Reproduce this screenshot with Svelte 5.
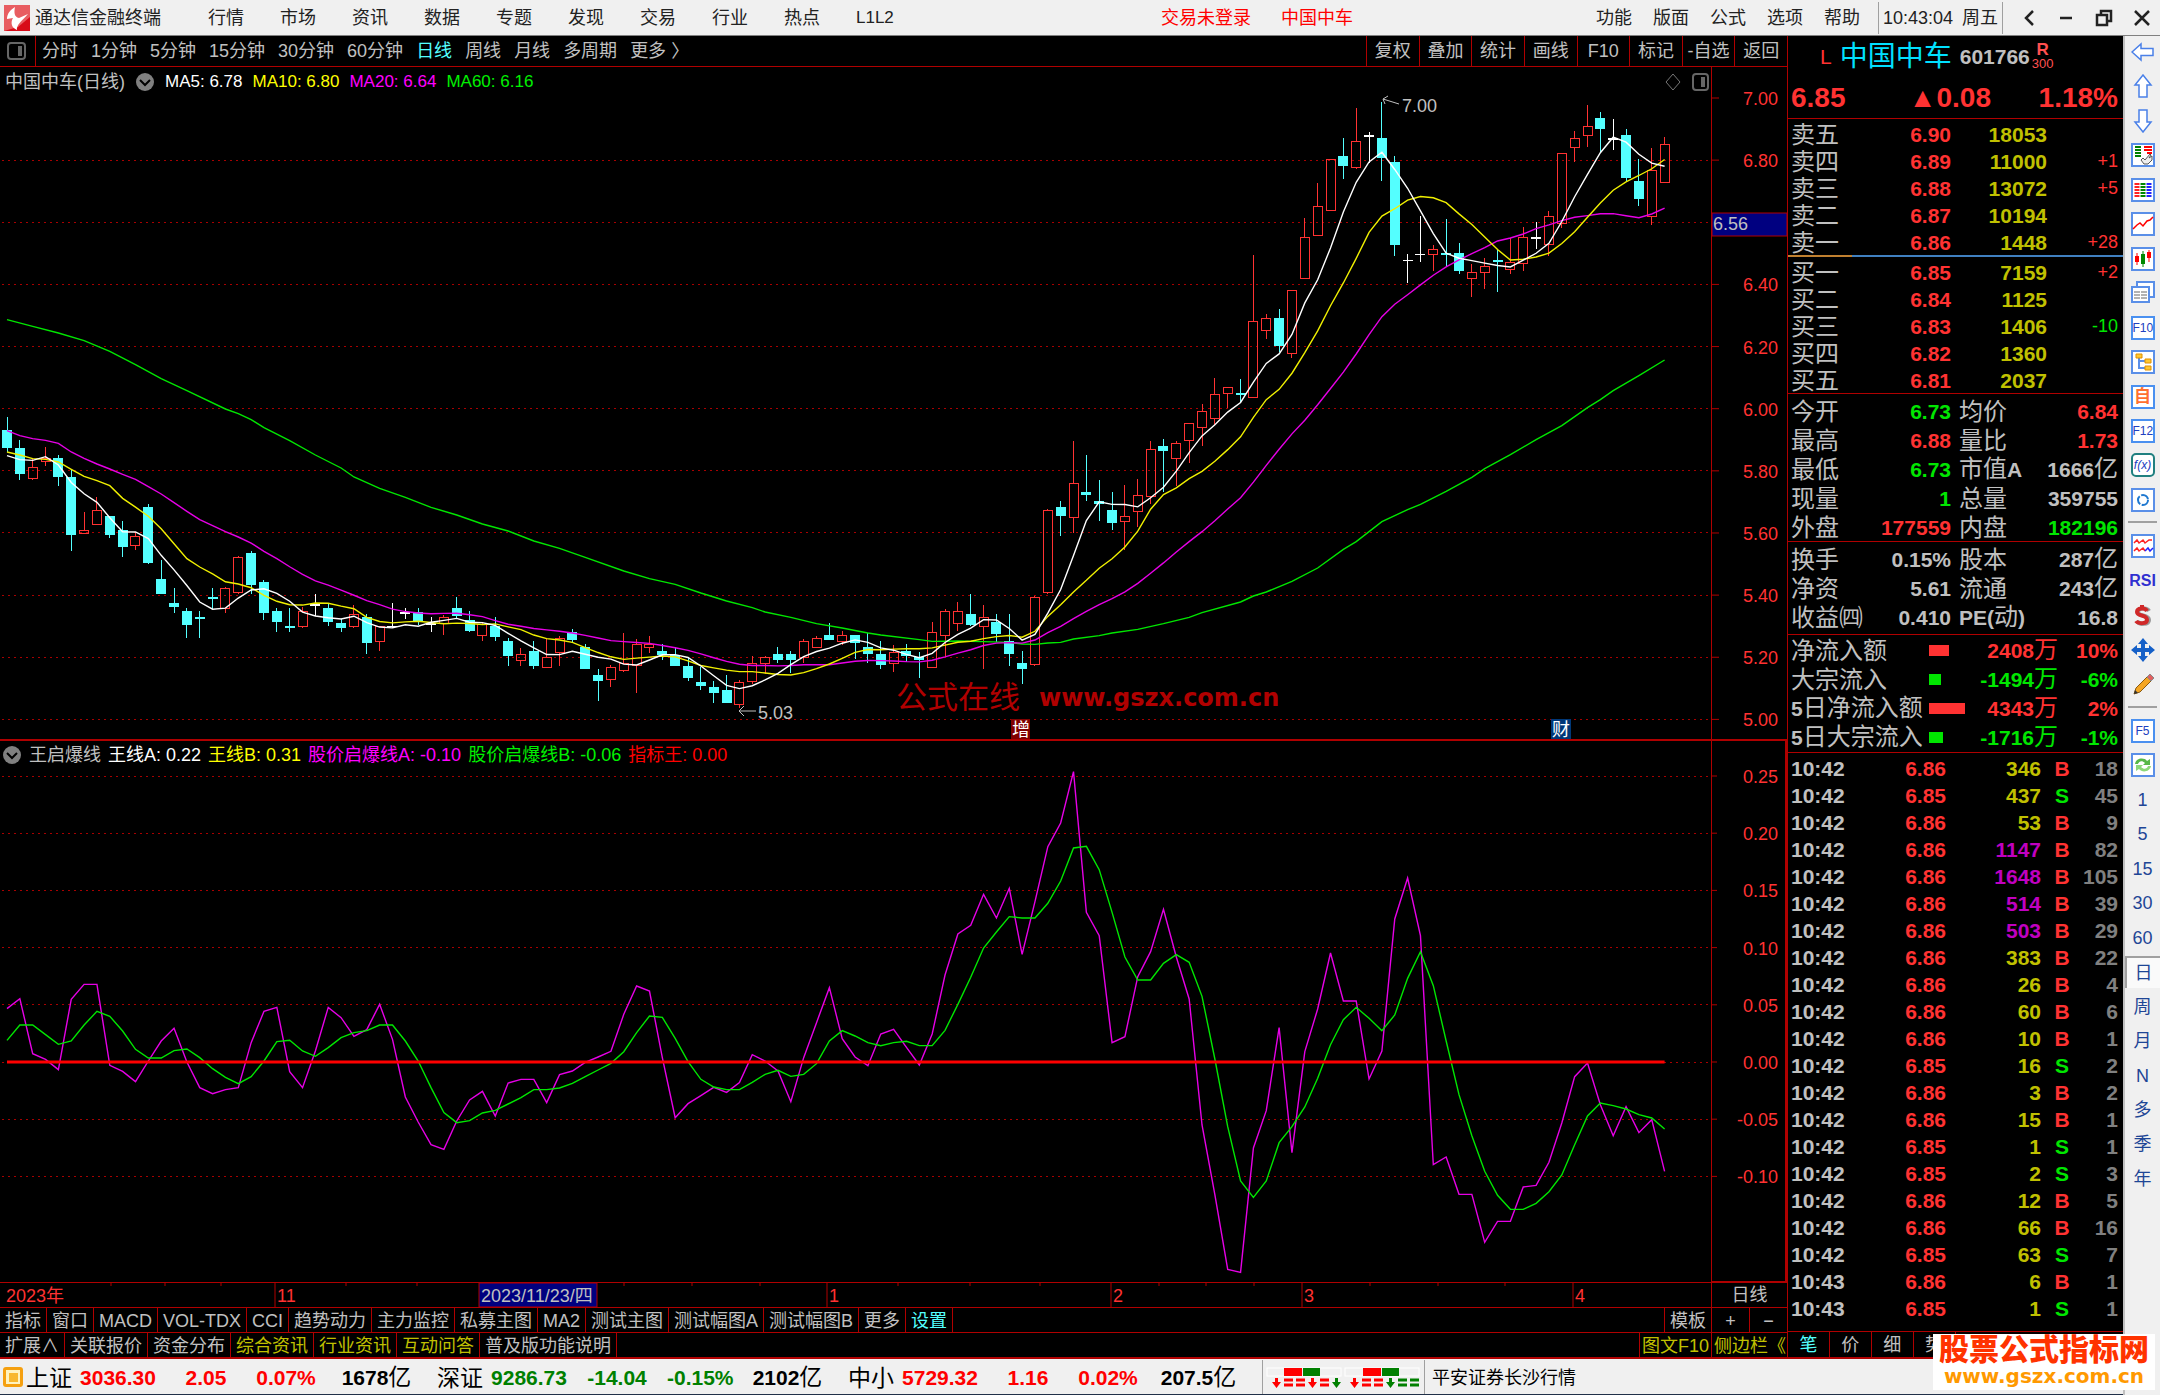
<script lang="ts">
    type Kind = 'c' | 'r' | 'w'
    type Bar = [Kind, number, number, number, number]

    let plotWidth = $state(1711)
    let period = $state('日线')
    let railActive = $state('日')

    const menus = ['行情', '市场', '资讯', '数据', '专题', '发现', '交易', '行业', '热点']
    const rightMenus = ['功能', '版面', '公式', '选项', '帮助']
    const periods = ['分时', '1分钟', '5分钟', '15分钟', '30分钟', '60分钟', '日线', '周线', '月线', '多周期', '更多 〉']
    const tools = ['复权', '叠加', '统计', '画线', 'F10', '标记', '-自选', '返回']
    const indicators = ['指标', '窗口', 'MACD', 'VOL-TDX', 'CCI', '趋势动力', '主力监控', '私募主图', 'MA2', '测试主图', '测试幅图A', '测试幅图B', '更多', '设置']
    const extras = ['扩展∧', '关联报价', '资金分布', '综合资讯', '行业资讯', '互动问答', '普及版功能说明']
    const yellowExtras = ['综合资讯', '行业资讯', '互动问答']

    // kind, high, body top, body bottom, low: thirds of a pixel, downwards
    const bars: Bar[] = [
        ['c', 112, 152, 205, 215], ['c', 179, 206, 282, 300], ['r', 233, 262, 295, 300], ['r', 202, 235, 245, 259], ['c', 224, 234, 291, 318],
        ['c', 268, 292, 466, 512], ['r', 395, 452, 461, 461], ['r', 350, 391, 433, 433], ['c', 409, 409, 465, 475], ['c', 422, 450, 502, 530],
        ['r', 457, 470, 496, 511], ['c', 373, 382, 551, 551], ['c', 540, 599, 642, 642], ['c', 625, 671, 683, 700], ['c', 684, 693, 737, 773],
        ['c', 692, 711, 717, 773], ['c', 625, 653, 659, 688], ['r', 620, 626, 686, 700], ['r', 527, 532, 637, 641], ['c', 513, 521, 615, 641],
        ['c', 599, 607, 700, 719], ['c', 684, 693, 727, 755], ['c', 684, 739, 745, 755], ['r', 680, 694, 740, 745], ['w', 643, 674, 674, 708],
        ['c', 671, 684, 727, 737], ['c', 716, 729, 745, 755], ['r', 676, 703, 740, 745], ['c', 703, 712, 791, 823], ['r', 740, 740, 784, 812],
        ['w', 670, 739, 739, 745], ['w', 683, 698, 698, 717], ['c', 684, 698, 726, 735], ['w', 712, 731, 731, 755], ['r', 706, 712, 730, 764],
        ['c', 652, 684, 709, 717], ['c', 694, 720, 755, 755], ['r', 727, 733, 766, 782], ['c', 711, 738, 773, 782], ['c', 773, 783, 830, 858],
        ['r', 805, 823, 842, 858], ['c', 783, 814, 859, 867], ['r', 775, 833, 861, 861], ['r', 768, 775, 818, 858], ['c', 746, 757, 780, 789],
        ['c', 793, 801, 867, 867], ['c', 868, 886, 903, 962], ['r', 855, 861, 898, 922], ['r', 760, 851, 871, 877], ['r', 778, 792, 855, 939],
        ['r', 769, 793, 802, 820], ['c', 793, 815, 825, 840], ['c', 802, 825, 858, 858], ['c', 830, 859, 894, 903], ['c', 860, 906, 920, 930],
        ['c', 904, 922, 939, 970], ['c', 886, 932, 970, 970], ['r', 900, 906, 973, 985], ['r', 828, 851, 905, 912], ['r', 828, 833, 850, 882],
        ['c', 801, 823, 840, 849], ['c', 814, 823, 840, 878], ['r', 778, 785, 833, 850], ['r', 769, 775, 802, 802], ['c', 729, 766, 781, 781],
        ['r', 752, 767, 785, 795], ['c', 765, 765, 791, 838], ['c', 760, 801, 822, 850], ['c', 783, 823, 857, 867], ['r', 796, 816, 850, 877],
        ['c', 791, 815, 830, 847], ['c', 815, 832, 840, 895], ['r', 725, 757, 862, 862], ['r', 688, 694, 766, 832], ['r', 665, 694, 730, 754],
        ['c', 643, 702, 737, 737], ['r', 675, 712, 739, 868], ['c', 702, 728, 763, 785], ['c', 702, 783, 822, 858], ['c', 814, 850, 867, 912],
        ['r', 647, 653, 853, 857], ['r', 387, 392, 636, 643], ['c', 364, 382, 408, 467], ['r', 184, 311, 411, 458], ['c', 224, 337, 345, 363],
        ['c', 300, 364, 372, 422], ['c', 337, 391, 430, 449], ['r', 314, 409, 424, 511], ['r', 296, 347, 393, 440], ['r', 184, 208, 349, 372],
        ['c', 178, 198, 214, 337], ['r', 184, 190, 235, 319], ['r', 130, 131, 181, 250], ['r', 71, 95, 141, 197], ['r', -5, 42, 114, 135],
        ['r', 23, 23, 41, 84], ['c', -2, 41, 46, 67], ['r', -375, -175, 51, 51], ['r', -199, -184, -148, -123], ['c', -212, -185, -101, -83],
        ['r', -270, -270, -79, -65], ['r', -487, -427, -304, -304], ['r', -590, -521, -434, -434], ['r', -661, -661, -508, -508], ['c', -726, -671, -641, -604],
        ['r', -815, -716, -638, -634], ['w', -744, -733, -733, -650], ['c', -835, -725, -665, -596], ['c', -672, -653, -403, -371], ['w', -379, -359, -359, -290],
        ['w', -492, -377, -377, -354], ['r', -406, -391, -377, -326], ['c', -482, -379, -373, -343], ['c', -411, -379, -326, -317], ['r', -347, -323, -304, -249],
        ['r', -365, -341, -323, -272], ['c', -390, -360, -354, -263], ['r', -425, -352, -332, -317], ['r', -460, -427, -350, -326], ['w', -473, -427, -427, -393],
        ['r', -506, -491, -408, -372], ['r', -680, -680, -471, -457], ['r', -748, -724, -697, -654], ['r', -825, -761, -733, -699], ['c', -803, -784, -753, -683],
        ['w', -784, -724, -724, -690], ['c', -752, -734, -606, -594], ['c', -663, -595, -542, -523], ['r', -695, -629, -491, -466], ['r', -730, -706, -592, -592],
    ]

    const ma60: [number, number][] = [
        [0, -181], [2, -161], [4, -141], [6, -118], [8, -86], [10, -46], [12, -4], [14, 32], [17, 87], [18, 101], [19, 119], [20, 143], [22, 182],
        [24, 225], [26, 264], [27, 291], [29, 325], [31, 352], [33, 382], [35, 405], [37, 432], [39, 453], [41, 483], [43, 505], [45, 532],
        [48, 573], [50, 596], [52, 613], [54, 639], [56, 663], [58, 683], [59, 696], [61, 712], [63, 731], [65, 744], [67, 759], [68, 765],
        [71, 779], [72, 784], [74, 783], [76, 785], [78, 787], [79, 792], [80, 793], [81, 789], [82, 787], [83, 777], [85, 767], [86, 759],
        [88, 748], [90, 731], [92, 712], [93, 698], [96, 666], [97, 648], [98, 636], [100, 604], [102, 564], [104, 508], [105, 485], [106, 455],
        [107, 425], [109, 389], [110, 373], [112, 334], [114, 292], [115, 266], [117, 224], [119, 179], [121, 137], [123, 83], [124, 59],
        [125, 32], [127, -13], [129, -60],
    ]

    const lineA = [
        803, 773, 938, 955, 986, 775, 730, 730, 973, 991, 1022, 960, 900, 862, 963, 1040, 1058, 1046, 1040, 905, 811, 799, 992, 1040, 930, 799,
        830, 886, 866, 790, 895, 1068, 1143, 1211, 1225, 1140, 1077, 1051, 1125, 1026, 1015, 1015, 1085, 1001, 990, 964, 948, 931, 820, 735, 750,
        950, 1130, 1088, 1064, 1039, 1054, 1025, 941, 960, 990, 1082, 950, 845, 740, 893, 948, 974, 879, 865, 919, 972, 879, 702, 579, 553, 460,
        531, 442, 640, 482, 317, 246, 92, 514, 584, 905, 887, 707, 632, 505, 648, 774, 1152, 1361, 1585, 1594, 1221, 1109, 860, 1235, 932, 804,
        636, 780, 780, 1014, 930, 534, 411, 584, 1271, 1248, 1360, 1360, 1504, 1441, 1441, 1338, 1333, 1264, 1146, 1007, 966, 1091, 1184, 1097,
        1175, 1136, 1291,
    ]
    const lineB = [
        898, 852, 852, 881, 910, 900, 852, 811, 826, 870, 925, 951, 951, 929, 924, 950, 983, 1009, 1028, 1007, 960, 902, 898, 930, 946, 920, 890,
        875, 869, 852, 852, 900, 960, 1040, 1115, 1145, 1139, 1116, 1108, 1089, 1070, 1046, 1046, 1041, 1027, 1007, 987, 967, 932, 875, 825, 829,
        892, 962, 1015, 1038, 1046, 1046, 1024, 1000, 988, 1006, 1000, 968, 900, 869, 885, 905, 914, 905, 901, 914, 914, 868, 790, 709, 621, 573,
        527, 531, 531, 487, 420, 321, 316, 386, 514, 648, 717, 717, 667, 641, 664, 766, 954, 1157, 1320, 1369, 1320, 1205, 1157, 1098, 1012, 911,
        836, 799, 832, 869, 822, 712, 632, 734, 900, 1061, 1184, 1291, 1363, 1405, 1405, 1387, 1352, 1302, 1211, 1125, 1086, 1094, 1104, 1121,
        1131, 1164,
    ]

    let step = $derived(plotWidth * 0.00751)
    const px = (i: number) => 7 + i * step
    const mainY = (v: number) => 285 + v / 3
    const subY = (v: number) => v / 3 - 26
    const closeOf = (b: Bar) => (b[0] == 'c' ? b[3] : b[2])

    // the first values need bars that lie left of the window
    function average(n: number, seed: number[]) {
        return bars.map((_, i) => {
            if (i < seed.length) return seed[i]
            let sum = 0
            for (let k = i - n + 1; k <= i; k++) sum += closeOf(bars[k])
            return sum / n
        })
    }
    const ma5 = average(5, [227, 239, 241, 230])
    const ma10 = average(10, [216, 225, 236, 238, 246, 268, 289, 302, 317])
    const ma20 = average(20, [152, 167, 176, 181, 190, 216, 235, 252, 267, 283, 298, 320, 342, 368, 394, 419, 437, 455, 471])

    const points = (list: number[], y: (v: number) => number) => list.map((v, i) => `${px(i)},${y(v)}`).join(' ')

    const prices = [7, 6.8, 6.6, 6.4, 6.2, 6, 5.8, 5.6, 5.4, 5.2, 5]
    const levels = [0.25, 0.2, 0.15, 0.1, 0.05, 0, -0.05, -0.1]
    const priceY = (p: number) => 31 + (7 - p) * 310.7
    const levelY = (l: number) => 321 - l * 1144

    const months: [number, string][] = [[275, '11'], [827, '1'], [1111, '2'], [1302, '3'], [1573, '4']]
    const weeks = [111, 165, 221, 346, 417, 624, 692, 760, 898, 970, 1040, 1159, 1206, 1254, 1370, 1438, 1505]

    const asks = [['卖五', '6.90', '18053', ''], ['卖四', '6.89', '11000', '+1'], ['卖三', '6.88', '13072', '+5'], ['卖二', '6.87', '10194', ''], ['卖一', '6.86', '1448', '+28']]
    const bids = [['买一', '6.85', '7159', '+2'], ['买二', '6.84', '1125', ''], ['买三', '6.83', '1406', '-10'], ['买四', '6.82', '1360', ''], ['买五', '6.81', '2037', '']]
    const stats = [
        ['今开', '6.73', 'green', '均价', '6.84', 'red'],
        ['最高', '6.88', 'red', '量比', '1.73', 'red'],
        ['最低', '6.73', 'green', '市值A', '1666亿', 'grey'],
        ['现量', '1', 'green', '总量', '359755', 'grey'],
        ['外盘', '177559', 'red', '内盘', '182196', 'green'],
    ]
    const funds = [
        ['换手', '0.15%', 'grey', '股本', '287亿', 'grey'],
        ['净资', '5.61', 'grey', '流通', '243亿', 'grey'],
        ['收益㈣', '0.410', 'grey', 'PE(动)', '16.8', 'grey'],
    ]
    const flows = [
        { name: '净流入额', bar: 20, value: '2408万', pct: '10%', color: 'red' },
        { name: '大宗流入', bar: 12, value: '-1494万', pct: '-6%', color: 'green' },
        { name: '5日净流入额', bar: 36, value: '4343万', pct: '2%', color: 'red' },
        { name: '5日大宗流入', bar: 14, value: '-1716万', pct: '-1%', color: 'green' },
    ]
    const ticks: [number, string, number][] = [
        [346, 'B', 18], [437, 'S', 45], [53, 'B', 9], [1147, 'B', 82], [1648, 'B', 105], [514, 'B', 39], [503, 'B', 29],
        [383, 'B', 22], [26, 'B', 4], [60, 'B', 6], [10, 'B', 1], [16, 'S', 2], [3, 'B', 2], [15, 'B', 1], [1, 'S', 1],
        [2, 'S', 3], [12, 'B', 5], [66, 'B', 16], [63, 'S', 7], [6, 'B', 1], [1, 'S', 1],
    ]
    const quoteTabs = ['笔', '价', '细', '势']

    const indexes = [
        { name: '上证', value: '3036.30', change: '2.05', pct: '0.07%', amount: '1678', color: 'up' },
        { name: '深证', value: '9286.73', change: '-14.04', pct: '-0.15%', amount: '2102', color: 'down' },
        { name: '中小', value: '5729.32', change: '1.16', pct: '0.02%', amount: '207.5', color: 'up' },
    ]
    const breadth = [
        { x: 0, signs: 'v==v=V' },
        { x: 78, signs: 'v==V##' },
    ]

    const frame = '<rect x="1" y="1" width="22" height="22" fill="#fff" stroke="#5a8fe8" stroke-width="2"/>'
    const icons: Record<string, string> = {
        back: '<path d="M1 12 L10 4 V8.500 H22 V15.500 H10 V20 Z" fill="#fff" stroke="#4a80e8" stroke-width="1.500"/>',
        up: '<path d="M12 1 L20 11 H16 V23 H8 V11 H4 Z" fill="#fff" stroke="#4a80e8" stroke-width="1.500"/>',
        down: '<path d="M12 23 L20 13 H16 V1 H8 V13 H4 Z" fill="#fff" stroke="#4a80e8" stroke-width="1.500"/>',
        pick: frame + '<path d="M4 4H10M4 7H10M4 10H10M4 13H10" stroke="#008000" stroke-width="2"/><path d="M13 4H21M13 7H21M16 10H21" stroke="#f00" stroke-width="2"/><path d="M10 17 L12 15 L14 17 L19 11 L20 12 L18 15 L21 13 V17 L17 21 H13 Z" fill="#eee" stroke="#555"/>',
        list: frame + '<g stroke-width="5" stroke-dasharray="2 1" fill="none"><path d="M6 5V20" stroke="#f22"/><path d="M12 5V20" stroke="#080"/><path d="M18 5V20" stroke="#22f"/></g>',
        trend: frame + '<path d="M2 17 L6 13 L9 11 L12 14 L16 9 L19 8 L22 5" fill="none" stroke="#f00" stroke-width="1.500"/>',
        kline: frame + '<path d="M6 6V18M18 3V15" stroke="#f00"/><path d="M12 4V20" stroke="#080"/><path d="M4 9H8V15H4ZM16 5H20V11H16Z" fill="#f00"/><path d="M10 7H14V17H10Z" fill="#080"/>',
        copy: '<path d="M6 1H23V16H6Z" fill="#fff" stroke="#5a8fe8" stroke-width="2"/><path d="M1 6H18V21H1Z" fill="#fff" stroke="#5a8fe8" stroke-width="2"/><path d="M3 11H9M10 11H16M3 14H9M10 14H16M3 17H9M10 17H16" stroke="#666"/>',
        tree: frame + '<path d="M8 6V18H14M8 11H14" fill="none" stroke="#5a8fe8" stroke-width="2"/><path d="M5 4H11V8H5ZM14 9H20V13H14ZM14 16H20V20H14Z" fill="#ffc830" stroke="#e09000"/>',
        circle: frame + '<circle cx="12" cy="12" r="5" fill="none" stroke="#1e78d0" stroke-width="2" stroke-dasharray="9 1.500"/>',
        waves: frame + '<path d="M3 9 L6 6 L8 9 L12 6 L14 9 L18 6 L21 6" fill="none" stroke="#f22" stroke-width="1.500"/><path d="M3 17 L6 14 L8 17 L12 14 L14 17" fill="none" stroke="#f22" stroke-width="1.500"/><path d="M14 17 L17 14 L19 17 L22 14" fill="none" stroke="#22f" stroke-width="1.500"/>',
        cash: '<path d="M18 7 C16 3 7 4 7 8 C7 13 18 10 18 16 C18 21 8 21 6 17" fill="none" stroke="#999" stroke-width="4"/><path d="M16 7 C14 3 6 4 6 8 C6 13 16 10 16 16 C16 20 7 20 5 17M11 1V4" fill="none" stroke="#d02828" stroke-width="4"/>',
        move: '<path d="M12 0 L17 6 H7ZM12 24 L17 18 H7ZM0 12 L6 7 V17ZM24 12 L18 7 V17Z" fill="#1560c8"/><path d="M12 5V19M5 12H19" stroke="#1560c8" stroke-width="4"/>',
        pen: '<path d="M3 21 L5 15 L16 4 L20 8 L9 19 Z" fill="#f5a623" stroke="#8a5a10"/><path d="M16 4 L19 1 L23 5 L20 8 Z" fill="#e06060" stroke="#888"/><path d="M3 21 L4 17 L7 20 Z" fill="#333"/>',
        refresh: frame + '<path d="M4 11 C5 5 13 4 16 8 L19 6 V12 H12 L14 10 C11 7 8 8 7 11Z" fill="#58b848"/><path d="M20 13 C19 19 11 20 8 16 L5 18 V12 H12 L10 14 C13 17 16 16 17 13Z" fill="#8cd878"/>',
    }
    const railTop = ['back', 'up', 'down', 'pick', 'list', 'trend', 'kline', 'copy', 'F10', 'tree', '自', 'F12', 'f(x)', 'circle']
    const railMiddle = ['waves', 'RSI', 'cash', 'move', 'pen']
    const railBottom = ['F5', 'refresh', '1', '5', '15', '30', '60', '日', '周', '月', 'N', '多', '季', '年']
    const boxed = ['F10', '自', 'F12', 'f(x)', 'F5']

    const split = (s: string) => s.match(/[\x20-\x7e]+|[^\x20-\x7e]+/g) ?? []
</script>

{#snippet mixed(text: string)}
    {#each split(text) as part}{#if part.charCodeAt(0) < 128}<b>{part}</b>{:else}{part}{/if}{/each}
{/snippet}

{#snippet railItem(name: string)}
    <button class="rail-item" class:pressed={railActive == name} aria-label={name} onclick={() => (railActive = name)}>
        {#if icons[name]}
            <svg width="24" height="24" viewBox="0 0 24 24">{@html icons[name]}</svg>
        {:else if boxed.includes(name)}
            <span class="boxed" class:orange={name == '自'} class:fx={name == 'f(x)'}>{name}</span>
        {:else}
            <span class:rsi={name == 'RSI'}>{name}</span>
        {/if}
    </button>
{/snippet}

{#snippet chevron()}
    <svg width="20" height="20" viewBox="0 0 20 20">
        <circle cx="10" cy="10" r="9" fill="#808080" />
        <path d="M5 8 L10 13 L15 8" fill="none" stroke="#000" stroke-width="2" />
    </svg>
{/snippet}

{#snippet book(rows: string[][])}
    <table class="book">
        <tbody>
            {#each rows as [name, price, volume, delta]}
                <tr>
                    <th scope="row">{name}</th>
                    <td class="red"><b>{price}</b></td>
                    <td class="yellow"><b>{volume}</b></td>
                    <td class="delta {delta[0] == '-' ? 'green' : 'red'}">{delta}</td>
                </tr>
            {/each}
        </tbody>
    </table>
{/snippet}

{#snippet pairs(rows: string[][])}
    <table class="pairs">
        <tbody>
            {#each rows as row}
                <tr>
                    <th scope="row">{@render mixed(row[0])}</th>
                    <td class={row[2]}>{@render mixed(row[1])}</td>
                    <th scope="row" class="second">{@render mixed(row[3])}</th>
                    <td class={row[5]}>{@render mixed(row[4])}</td>
                </tr>
            {/each}
        </tbody>
    </table>
{/snippet}

<div class="app">
    <header class="titlebar">
        <svg class="logo" width="26" height="26" viewBox="0 0 26 26">
            <rect width="26" height="26" fill="#d80c18" />
            <path d="M0 0H26V12L14 22L0 26Z" fill="#f08080" opacity="0.7" />
            <path d="M11 2 C6 5 3 9 3 14 L9 13 C6 18 8 23 13 25 C12 20 18 16 24 9 L15 13 C10 12 10 7 11 2Z" fill="#fff" />
        </svg>
        <span>通达信金融终端</span>
        <nav class="menus">
            {#each menus as menu}<button>{menu}</button>{/each}
            <button class="latin">L1L2</button>
        </nav>
        <div class="notice"><span>交易未登录</span><span>中国中车</span></div>
        <nav class="right-menus">
            {#each rightMenus as menu}<button>{menu}</button>{/each}
        </nav>
        <div class="clock"><span>10:43:04</span><span>周五</span></div>
        <div class="window">
            <button aria-label="后退"><svg width="16" height="18"><path d="M12 2 L5 9 L12 16" /></svg></button>
            <button aria-label="最小化"><svg width="16" height="18"><path d="M2 9H14" /></svg></button>
            <button aria-label="还原"><svg width="18" height="18"><path d="M2 6H12V16H2ZM6 5V2H16V12H13" /></svg></button>
            <button aria-label="关闭"><svg width="16" height="18"><path d="M1 2 L15 16M15 2 L1 16" /></svg></button>
        </div>
    </header>

    <div class="body">
        <div class="desk">
            <div class="work">
                <main class="charts">
                    <div class="periods">
                        <button class="toggle" aria-label="侧栏">
                            <svg width="20" height="18"><rect x="1" y="1" width="17" height="16" rx="3" fill="none" stroke="#666" stroke-width="2" /><rect x="11" y="4" width="4" height="10" fill="#666" /></svg>
                        </button>
                        <div class="period-list">
                            {#each periods as p}
                                <button class:cyan={period == p} onclick={() => (period = p)}>{p}</button>
                            {/each}
                        </div>
                        <div class="tools">
                            {#each tools as tool}<button>{tool}</button>{/each}
                        </div>
                    </div>

                    <section class="panel main-panel">
                        <div class="plot" bind:clientWidth={plotWidth}>
                            <div class="legend">
                                <span class="title">中国中车(日线)</span>
                                {@render chevron()}
                                <span class="white">MA5: 6.78</span>
                                <span class="bright-yellow">MA10: 6.80</span>
                                <span class="magenta">MA20: 6.64</span>
                                <span class="lime">MA60: 6.16</span>
                                <svg class="corner" width="47" height="20">
                                    <path d="M9 2 L16 10 L9 18 L2 10Z" fill="none" stroke="#777" />
                                    <rect x="29" y="2" width="15" height="16" rx="3" fill="none" stroke="#666" stroke-width="2" />
                                    <rect x="37" y="5" width="4" height="10" fill="#666" />
                                </svg>
                            </div>
                            <svg class="canvas" width={plotWidth} height="644">
                                {#each prices.slice(1) as p}
                                    <line class="grid" x1="2" x2={plotWidth} y1={priceY(p) - 28} y2={priceY(p) - 28} />
                                {/each}
                                <g class="watermark">
                                    <text x="896" y="613" font-size="31">公式在线</text>
                                    <text class="url" x="1039" y="611" font-size="24">www.gszx.com.cn</text>
                                </g>
                                {#each bars as [kind, high, top, bottom, low], i}
                                    <g class="bar {kind}">
                                        {#if kind == 'r'}
                                            <line x1={px(i)} x2={px(i)} y1={mainY(high)} y2={mainY(top)} />
                                            <line x1={px(i)} x2={px(i)} y1={mainY(bottom)} y2={mainY(low)} />
                                            <rect x={px(i) - 4.5} y={mainY(top)} width="9" height={(bottom - top) / 3} />
                                        {:else}
                                            <line x1={px(i)} x2={px(i)} y1={mainY(high)} y2={mainY(low)} />
                                            <rect x={px(i) - 5} y={mainY(top) - 0.5} width="10" height={Math.max(1.5, (bottom - top) / 3)} />
                                        {/if}
                                    </g>
                                {/each}
                                <polyline class="line" stroke="#00e600" points={ma60.map(([i, v]) => `${px(i)},${mainY(v)}`).join(' ')} />
                                <polyline class="line" stroke="#e600e6" points={points(ma20, mainY)} />
                                <polyline class="line" stroke="#f0f000" points={points(ma10, mainY)} />
                                <polyline class="line" stroke="#fff" points={points(ma5, mainY)} />
                                <path class="arrow" d="M1399 9 L1383 4 M1388 1 L1383 4 L1385 9" />
                                <text class="note" x="1402" y="17">7.00</text>
                                <path class="arrow" d="M756 616 H739 M744 611 L739 616 L744 621" />
                                <text class="note" x="758" y="624">5.03</text>
                                <rect x="1011" y="624" width="19" height="20" fill="#800000" />
                                <text class="mark" x="1012" y="641">增</text>
                                <rect x="1551" y="624" width="20" height="20" fill="#003878" />
                                <text class="mark" x="1552" y="641">财</text>
                            </svg>
                        </div>
                        <svg class="axis" width="75" height="672">
                            {#each prices as p}
                                <line x1="0" x2="7" y1={priceY(p)} y2={priceY(p)} />
                                {#if p != 6.6}<text x="66" y={priceY(p) + 7}>{p.toFixed(2)}</text>{/if}
                            {/each}
                            <rect x="0" y="146" width="75" height="23" fill="#000080" stroke="#b00000" />
                            <text class="cursor" x="1" y="163">6.56</text>
                        </svg>
                    </section>

                    <section class="panel sub-panel">
                        <div class="plot">
                            <div class="legend short">
                                {@render chevron()}
                                <span>王启爆线</span>
                                <span class="white">王线A: 0.22</span>
                                <span class="bright-yellow">王线B: 0.31</span>
                                <span class="magenta">股价启爆线A: -0.10</span>
                                <span class="lime">股价启爆线B: -0.06</span>
                                <span class="pure-red">指标王: 0.00</span>
                            </div>
                            <svg class="canvas" width={plotWidth} height="514">
                                {#each levels as l}
                                    <line class="grid" x1="2" x2={plotWidth} y1={levelY(l) - 26} y2={levelY(l) - 26} />
                                {/each}
                                <polyline class="line" stroke="#e600e6" points={points(lineA, subY)} />
                                <polyline class="line" stroke="#00e600" points={points(lineB, subY)} />
                                <line x1={px(0)} x2={px(129)} y1="295" y2="295" stroke="#f00" stroke-width="3" />
                            </svg>
                        </div>
                        <svg class="axis" width="75" height="540">
                            {#each levels as l}
                                <line x1="0" x2="5" y1={levelY(l)} y2={levelY(l)} />
                                <text x="66" y={levelY(l) + 7}>{l.toFixed(2)}</text>
                            {/each}
                        </svg>
                    </section>

                    <div class="dates">
                        <svg class="canvas" width={plotWidth} height="24">
                            <text x="6" y="19">2023年</text>
                            {#each weeks as x}<line x1={x} x2={x} y1="0" y2="3" />{/each}
                            {#each months as [x, name]}
                                <line x1={x} x2={x} y1="0" y2="24" />
                                <text x={x + 2} y="19">{name}</text>
                            {/each}
                            <rect x="479" y="0" width="118" height="24" fill="#000080" stroke="#b00000" />
                            <text class="cursor" x="481" y="19">2023/11/23/四</text>
                        </svg>
                        <span class="unit">日线</span>
                    </div>
                    <div class="strip">
                        {#each indicators as name}<button class:cyan={name == '设置'}>{name}</button>{/each}
                        <div class="strip-end">
                            <button>模板</button>
                            <button class="half">+</button>
                            <button class="half">−</button>
                        </div>
                    </div>
                    <div class="strip last">
                        {#each extras as name}<button class:yellow={yellowExtras.includes(name)}>{name}</button>{/each}
                        <div class="strip-end">
                            <button class="yellow tight">图文F10</button>
                            <button class="yellow tight side">侧边栏《</button>
                        </div>
                    </div>
                </main>

                <aside class="quote">
                    <div class="stock">
                        <span class="level">L</span>
                        <span class="name">中国中车</span>
                        <b>601766</b>
                        <span class="flags"><b>R</b><span>300</span></span>
                    </div>
                    <div class="last-price"><b>6.85</b><b>▲0.08</b><b>1.18%</b></div>
                    {@render book(asks)}
                    <div class="balance"></div>
                    {@render book(bids)}
                    {@render pairs(stats)}
                    {@render pairs(funds)}
                    <table class="flows">
                        <tbody>
                            {#each flows as flow}
                                <tr class={flow.color}>
                                    <th scope="row">{@render mixed(flow.name)}</th>
                                    <td class="bar-cell"><div class="flow-bar" style="width: {flow.bar}px"></div></td>
                                    <td>{@render mixed(flow.value)}</td>
                                    <td><b>{flow.pct}</b></td>
                                </tr>
                            {/each}
                        </tbody>
                    </table>
                    <table class="ticks">
                        <tbody>
                            {#each ticks as [volume, side, count], i}
                                <tr>
                                    <td class="grey time">10:{i < 19 ? 42 : 43}</td>
                                    <td class="red">{side == 'B' ? '6.86' : '6.85'}</td>
                                    <td class={volume > 500 ? 'purple' : 'yellow'}>{volume}</td>
                                    <td class="side-mark {side == 'B' ? 'red' : 'green'}">{side}</td>
                                    <td class="dim">{count}</td>
                                </tr>
                            {/each}
                        </tbody>
                    </table>
                    <div class="quote-tabs">
                        {#each quoteTabs as tab, i}<button class:cyan={i == 0}>{tab}</button>{/each}
                    </div>
                </aside>
            </div>

            <footer class="status">
                <svg class="status-icon" width="22" height="22" viewBox="0 0 22 22">
                    <rect x="1" y="1" width="20" height="20" rx="3" fill="#f5a010" />
                    <rect x="4" y="4" width="14" height="14" fill="#fff3c0" />
                    <rect x="7" y="7" width="9" height="9" fill="#f8b830" />
                </svg>
                {#each indexes as idx}
                    <div class="index {idx.color}">
                        <span class="index-name">{idx.name}</span>
                        <b>{idx.value}</b>
                        <b>{idx.change}</b>
                        <b>{idx.pct}</b>
                        <span class="amount"><b>{idx.amount}</b>亿</span>
                    </div>
                {/each}
                <svg class="breadth" width="161" height="34">
                    {#each breadth as group, g}
                        <rect x={group.x + 4} y="8" width="74" height="8" fill="none" stroke="#fff" />
                        <rect x={group.x + 21 + g} y="8" width="18" height="8" fill="#f00" />
                        <rect x={group.x + 40 + g} y="8" width="17" height="8" fill="#008000" />
                        {#each group.signs as sign, i}
                            {#if sign == 'v' || sign == 'V'}
                                <path d="M{group.x + 12 + i * 12} 18 h3 v4 h3 l-4.5 6 l-4.5 -6 h3Z" fill={sign == 'v' ? '#f00' : '#008000'} />
                            {:else}
                                <path d="M{group.x + 9 + i * 12} 20 h9 m-9 5 h9" fill="none" stroke={sign == '=' ? '#f00' : '#008000'} stroke-width="3" />
                            {/if}
                        {/each}
                    {/each}
                </svg>
                <span class="broker">平安证券长沙行情</span>
            </footer>
        </div>

        <nav class="rail">
            <div class="rail-group first">
                {#each railTop as name}{@render railItem(name)}{/each}
            </div>
            <hr />
            <div class="rail-group second-group">
                {#each railMiddle as name}{@render railItem(name)}{/each}
            </div>
            <hr />
            <div class="rail-group third">
                {#each railBottom as name}{@render railItem(name)}{/each}
            </div>
        </nav>
    </div>

    <div class="banner">
        <strong>股票公式指标网</strong>
        <span>www.gszx.com.cn</span>
    </div>
</div>

<style>
    :global(body) {
        margin: 0;
        background: #000;
    }
    .app {
        position: relative;
        font-family: "Liberation Sans", "Noto Sans CJK SC", sans-serif;
        font-size: 18px;
        line-height: 22px;
        color: #c0c0c0;
        white-space: nowrap;
    }
    button {
        padding: 0;
        border: 0;
        background: none;
        color: inherit;
        font: inherit;
        line-height: 22px;
    }
    svg {
        display: block;
        flex: none;
    }
    table {
        width: 100%;
        table-layout: fixed;
        border-collapse: collapse;
    }
    th,
    td {
        padding: 0;
        text-align: right;
        font-weight: normal;
    }
    th {
        text-align: left;
        color: #c0c0c0;
    }
    .latin { font-size: 17px; }
    .cyan { color: #54ffff; }
    .white { color: #fff; }
    .red { color: #ff3232; }
    .pure-red { color: #f00; }
    .green { color: #00e600; }
    .lime { color: #00f000; }
    .magenta { color: #f0f; }
    .purple { color: #c000c0; }
    .bright-yellow { color: #ff0; }
    .yellow { color: #c0c000; }
    .grey { color: #c0c0c0; }
    .dim { color: #808080; }

    .titlebar {
        display: flex;
        align-items: center;
        height: 35px;
        padding-left: 4px;
        border-bottom: 1px solid #808080;
        background: #f0f0f0;
        color: #222;
    }
    .logo { margin-right: 5px; }
    .menus {
        display: flex;
        gap: 36px;
        margin-left: 47px;
    }
    .notice {
        display: flex;
        gap: 30px;
        margin-left: auto;
        color: #f00;
    }
    .right-menus {
        display: flex;
        gap: 21px;
        margin: 0 18px 0 243px;
    }
    .clock {
        display: flex;
        align-items: center;
        gap: 9px;
        height: 32px;
        padding: 0 4px;
        border: solid #a0a0a0;
        border-width: 0 1px;
    }
    .window {
        display: flex;
        gap: 21px;
        padding: 0 10px 0 18px;
    }
    .window path {
        fill: none;
        stroke: #222;
        stroke-width: 2.5;
    }

    .body,
    .work {
        display: flex;
    }
    .desk {
        flex: 1;
        min-width: 0;
    }
    .charts {
        flex: 1;
        min-width: 0;
    }
    .periods {
        display: flex;
        height: 30px;
        border-bottom: 1px solid #b00000;
    }
    .toggle {
        width: 36px;
        padding-left: 7px;
        border-right: 1px solid #b00000;
    }
    .period-list {
        display: flex;
        gap: 13px;
        padding-left: 6px;
    }
    .tools {
        display: flex;
        width: 421px;
        margin-left: auto;
    }
    .tools button {
        flex: 1;
        border-left: 1px solid #b00000;
    }

    .panel { display: flex; }
    .main-panel { border-bottom: 2px solid #b00000; }
    .plot {
        flex: 1;
        min-width: 0;
        overflow: hidden;
    }
    .legend {
        display: flex;
        align-items: center;
        gap: 10px;
        height: 28px;
        padding: 2px 0 0 5px;
        box-sizing: border-box;
        font-size: 17px;
    }
    .short {
        gap: 7px;
        height: 26px;
        padding-left: 2px;
        font-size: 18px;
    }
    .title { font-size: 18px; }
    .corner { margin-left: auto; }
    .grid {
        stroke: #a80000;
        stroke-dasharray: 2 4;
        shape-rendering: crispEdges;
    }
    .line {
        fill: none;
        stroke-width: 1.4;
    }
    .bar { shape-rendering: crispEdges; }
    .c line, .c rect { fill: #54ffff; stroke: #54ffff; }
    .c rect, .w rect { stroke: none; }
    .r line, .r rect { fill: none; stroke: #ff3232; }
    .w line, .w rect { fill: #fff; }
    .w line { stroke: #fff; }
    .watermark { fill: #b00000; }
    .url { font-family: "DejaVu Sans", sans-serif; font-weight: bold; }
    .arrow { fill: none; stroke: #c0c0c0; }
    .note { fill: #c0c0c0; }
    .mark { fill: #fff; font-size: 18px; }
    .axis { border-left: 1px solid #b00000; }
    .sub-panel .axis {
        width: 73px;
        border-right: 2px solid #b00000;
        border-bottom: 1px solid #b00000;
    }
    .axis line, .dates line { stroke: #b00000; }
    .axis text {
        fill: #ff3232;
        text-anchor: end;
    }
    .axis .cursor { text-anchor: start; }
    .axis .cursor, .dates .cursor { fill: #c0c0c0; }

    .dates {
        display: flex;
        height: 24px;
        border-top: 1px solid #b00000;
    }
    .dates text { fill: #ff3232; }
    .unit {
        flex: 1;
        border-left: 1px solid #b00000;
        line-height: 24px;
        text-align: center;
    }
    .strip {
        display: flex;
        height: 24px;
        border-top: 1px solid #b00000;
    }
    .last {
        border-bottom: 2px solid #b00000;
    }
    .strip button {
        padding: 1px 5px 0;
        border-right: 1px solid #b00000;
    }
    .strip-end {
        display: flex;
        margin-left: auto;
    }
    .strip-end button {
        border-right: 0;
        border-left: 1px solid #b00000;
    }
    .strip .half {
        width: 38px;
    }
    .strip .tight { padding: 1px 2px 0; }
    .strip .side { width: 76px; overflow: hidden; }

    .quote {
        display: flex;
        flex-direction: column;
        flex: none;
        width: 335px;
        border-left: 1px solid #b00000;
    }
    .quote b { font-size: 21px; }
    .stock {
        display: flex;
        align-items: center;
        gap: 8px;
        height: 42px;
        padding-left: 32px;
        line-height: 28px;
    }
    .level { color: #ff3232; font-size: 21px; }
    .name { color: #00e0ff; font-size: 28px; }
    .flags {
        display: flex;
        flex-direction: column;
        align-items: center;
        margin-left: -6px;
        color: #ff5050;
        font-size: 13px;
        line-height: 14px;
    }
    .quote .flags b { font-size: 17px; }
    .last-price {
        display: grid;
        grid-template-columns: 1fr auto 127px;
        align-items: center;
        height: 40px;
        padding: 0 5px 0 3px;
        border-bottom: 1px solid #b00000;
        color: #ff3232;
    }
    .quote .last-price b { font-size: 28px; }
    .last-price b:last-child { text-align: right; }
    .quote table {
        display: block;
        padding: 0 5px 0 3px;
        border-bottom: 1px solid #b00000;
        box-sizing: border-box;
        font-size: 24px;
    }
    .quote tbody {
        display: block;
    }
    .quote tr {
        display: grid;
        align-items: center;
        height: 29px;
        line-height: 29px;
    }
    .quote .book tr, .quote .ticks tr {
        height: 27px;
        line-height: 27px;
    }
    .book tr { grid-template-columns: 77px 83px 96px 71px; }
    .quote .book { padding-top: 1px; }
    .quote .book:nth-of-type(1) { border-bottom: 0; }
    .quote .delta { font-size: 18px; }
    .balance {
        height: 2px;
        background: linear-gradient(to right, #c08030 64px, #4080c0 64px);
    }
    .pairs tr { grid-template-columns: 77px 83px 88px 79px; }
    .second { padding-left: 8px; }
    .quote .pairs { padding-top: 2px; }
    .quote .pairs + .pairs { padding-bottom: 3px; }
    .flows tr { grid-template-columns: 138px 36px 93px 60px; }
    .quote .flows { padding-bottom: 1px; }
    .flow-bar {
        height: 11px;
        background: currentColor;
    }
    .ticks tr { grid-template-columns: 80px 75px 95px 42px 35px; }
    .quote .ticks {
        padding-top: 2px;
        border-bottom: 0;
        font-size: 21px;
    }
    .ticks td { font-weight: bold; }
    .ticks .time { text-align: left; }
    .ticks .side-mark { text-align: center; }
    .quote-tabs {
        display: grid;
        grid-template-columns: repeat(8, 1fr);
        height: 25px;
        margin-top: auto;
        border-top: 1px solid #b00000;
        border-bottom: 2px solid #b00000;
    }
    .quote-tabs button { border-right: 1px solid #b00000; }

    .status {
        display: flex;
        align-items: center;
        height: 35px;
        border-bottom: 1px solid #203048;
        background: #f0f0f0;
        color: #000;
    }
    .status-icon { margin: 0 2px 0 2px; }
    .index {
        display: grid;
        grid-template-columns: 54px 76px 100px 60px 121px;
        align-items: center;
        padding-top: 2px;
        text-align: center;
        font-size: 21px;
        line-height: 32px;
    }
    .index-name, .amount { font-size: 23px; text-align: left; }
    .amount { text-align: center; }
    .amount b { font-size: 21px; }
    .up { color: #f00; }
    .down { color: #008000; }
    .index .index-name, .index .amount { color: #000; }
    .breadth {
        margin-left: 3px;
        border: solid #a0a0a0;
        border-width: 0 1px;
    }
    .broker { padding: 2px 0 0 7px; }

    .rail {
        flex: none;
        width: 35px;
        border-left: 2px solid #c0c0c0;
        background: #f0f0f0;
        color: #1e4696;
    }
    .rail hr {
        height: 2px;
        margin: 5px 3px;
        border: 0;
        background: #a0a0a0;
    }
    .rail-group {
        display: flex;
        flex-direction: column;
        justify-content: space-between;
    }
    .first { height: 480px; }
    .second-group { height: 171px; padding-top: 2px; }
    .third { height: 480px; padding-top: 2px; }
    .rail-item {
        display: flex;
        align-items: center;
        justify-content: center;
        height: 32px;
    }
    .rail-item.pressed {
        border: solid #a0a0a0;
        border-width: 2px 0 0 2px;
        background: #fafafa;
        box-sizing: border-box;
    }
    .boxed {
        width: 20px;
        height: 20px;
        border: 2px solid #4a90f0;
        background: #fff;
        color: #2040c0;
        font-size: 12px;
        line-height: 20px;
        text-align: center;
    }
    .orange { color: #ff7030; font-size: 17px; font-weight: bold; }
    .fx { border-color: #208080; border-radius: 5px; font-style: italic; }
    .rsi { color: #3030d0; font-size: 16px; font-weight: bold; }

    .banner {
        position: absolute;
        right: 5px;
        bottom: 5px;
        display: flex;
        flex-direction: column;
        align-items: center;
        width: 222px;
        height: 56px;
        background: #fff;
    }
    .banner strong {
        color: #ff3300;
        font-size: 30px;
        font-weight: 900;
        line-height: 32px;
    }
    .banner span {
        color: #ff9900;
        font-family: "DejaVu Sans", sans-serif;
        font-size: 20px;
        font-weight: bold;
        line-height: 20px;
    }
</style>
